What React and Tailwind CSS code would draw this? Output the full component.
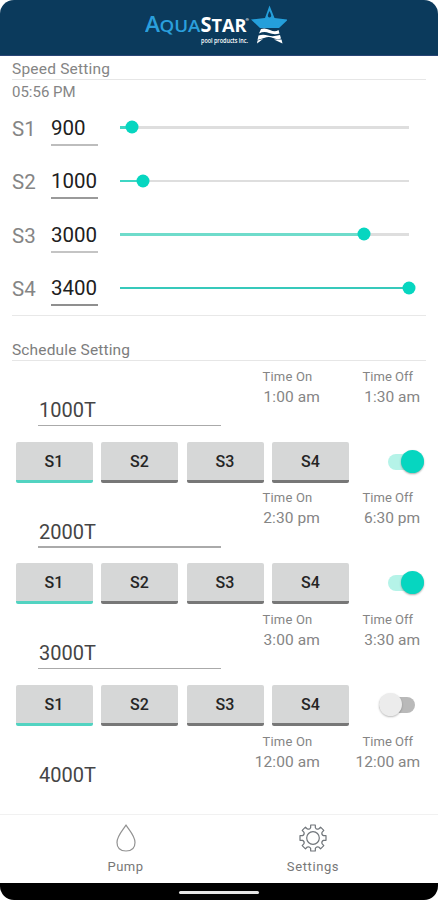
const speeds = [
  { id: 'S1', value: '900', pct: 4, line: 'bg-[#bdbdbd]', fill: 'bg-[#3fd6c4]' },
  { id: 'S2', value: '1000', pct: 7.8, line: 'bg-[#9a9a9a]', fill: 'bg-[#3fd6c4]' },
  { id: 'S3', value: '3000', pct: 84.6, line: 'bg-[#c4c4c4]', fill: 'bg-[#6fdccb]' },
  { id: 'S4', value: '3400', pct: 100, line: 'bg-[#8f8f8f]', fill: 'bg-[#36c9bb]' },
];

const schedules = [
  { name: '1000T', on: '1:00 am', off: '1:30 am', enabled: true },
  { name: '2000T', on: '2:30 pm', off: '6:30 pm', enabled: true },
  { name: '3000T', on: '3:00 am', off: '3:30 am', enabled: false },
  { name: '4000T', on: '12:00 am', off: '12:00 am' },
];

function Logo() {
  return (
    <svg width="142" height="48" viewBox="0 0 142 48" className="mt-1 mr-[7px]" fontFamily="'Open Sans', sans-serif">
      <g fill="#2a9fdc" fontWeight="600">
        <text x="0" y="28" fontSize="21" textLength="15" lengthAdjust="spacingAndGlyphs">A</text>
        <text x="14.500" y="28" fontSize="17" textLength="41" lengthAdjust="spacingAndGlyphs">QUA</text>
      </g>
      <g fill="#fff" fontWeight="700">
        <text x="55.500" y="28" fontSize="21.5" textLength="11" lengthAdjust="spacingAndGlyphs">S</text>
        <text x="66.500" y="28" fontSize="17" textLength="35" lengthAdjust="spacingAndGlyphs">TAR</text>
        <text x="100.500" y="17" fontSize="4">®</text>
        <text x="56" y="38.500" fontSize="6.5" fontWeight="600" textLength="47" lengthAdjust="spacingAndGlyphs">pool products inc.</text>
      </g>
      <path d="M106 15.500L120 14L124.500 1.500L129.500 14L143 15.500L134 24H115Z" fill="#249fdb" />
      <path d="M124.500 7C122.500 11 122 13 124.500 13.500C127 13 126.500 11 124.500 7Z" fill="#0c3a5d" />
      <path d="M116 25Q120 23.500 125 26T133.500 26L134.500 29.500Q129 31 124 29T114 29.500Z" fill="#fff" />
      <path d="M113.500 31.500Q118 30 123 31.500T135 31L136 34.500Q132 36 128 34T119 34L112.500 36Z" fill="#fff" />
      <path d="M112.500 36.500L118 35L112 39.500ZM129 35.500L136.500 35.500L137.500 39.500Z" fill="#fff" />
    </svg>
  );
}

function SpeedRow({ speed }) {
  return (
    <div className="flex h-[53.5px] items-start pl-3">
      <span className="mt-[14px] w-[39px] text-[20.500px] leading-7 text-[#858585]">{speed.id}</span>
      <div className="w-[47px]">
        <div className="mt-[13px] h-[30px] text-[20.500px] leading-7 text-[#202020]">{speed.value}</div>
        <div className={`h-[2px] ${speed.line}`} />
      </div>
      <div className="relative mt-[25.5px] ml-[22px] h-[2.5px] w-[289px] bg-[#dedede]">
        <div className={`h-full ${speed.fill}`} style={{ width: `${speed.pct}%` }} />
        <div className="absolute top-1/2 size-[13px] -translate-1/2 rounded-full bg-[#06d6c0]" style={{ left: `${speed.pct}%` }} />
      </div>
    </div>
  );
}

function Toggle({ on }) {
  return on ? (
    <div className="relative mt-[12px] ml-[39px] h-4 w-9 rounded-full bg-[#b5f3e8]">
      <div className="absolute -top-[4px] left-[13px] size-[23px] rounded-full bg-[#06d6c0] shadow-[0_1px_2px_#0005]" />
    </div>
  ) : (
    <div className="relative mt-[12px] ml-[30px] h-4 w-9 rounded-full bg-[#b9b9b9]">
      <div className="absolute -top-[4px] left-0 size-[23px] rounded-full bg-[#ececec] shadow-[0_1px_2px_#0004]" />
    </div>
  );
}

function Schedule({ item }) {
  return (
    <div className="h-[121.7px]">
      <div className="flex h-[80.5px]">
        <div className="ml-[38px] w-[183px] pt-[35px]">
          <div className="h-[28.5px] pl-px text-[20px] leading-7 text-[#454545]">{item.name}</div>
          {item.enabled !== undefined && <div className="h-[1.5px] bg-[#aaa]" />}
        </div>
        <div className="w-[99px] pt-[5.5px] text-right text-[#858585]">
          <div className="pr-[7.500px] text-[13px] leading-5 tracking-[0.2px]">Time On</div>
          <div className="text-[15.500px] leading-5 tracking-[0.1px]">{item.on}</div>
        </div>
        <div className="w-[100px] pt-[5.5px] text-right text-[#858585]">
          <div className="pr-[7px] text-[13px] leading-5">Time Off</div>
          <div className="text-[15.500px] leading-5">{item.off}</div>
        </div>
      </div>
      {item.enabled !== undefined && (
        <div className="flex pl-[15.5px]">
          <div className="flex gap-[8.500px]">
            {speeds.map((s, i) => (
              <div
                key={s.id}
                className={`flex h-[41px] w-[77px] items-center justify-center rounded-[2px] border-b-3 bg-[#d6d7d7] pt-[2px] text-[16px] font-medium text-[#252525] ${i === 0 ? 'border-[#52d3c1]' : 'border-[#777]'}`}
              >
                {s.id}
              </div>
            ))}
          </div>
          <Toggle on={item.enabled} />
        </div>
      )}
    </div>
  );
}

function Gear() {
  const d = Array.from({ length: 8 }, (_, i) => {
    const at = (deg, r) => {
      const a = ((i * 45 + deg - 90) * Math.PI) / 180;
      return `${(14 + Math.cos(a) * r).toFixed(2)} ${(14 + Math.sin(a) * r).toFixed(2)}`;
    };
    return `${i === 0 ? 'M' : 'L'}${at(-10, 13.2)}L${at(10, 13.2)}L${at(13, 10.6)}Q${at(22.5, 9)} ${at(32, 10.6)}`;
  }).join('');
  return (
    <svg width="28" height="28" viewBox="0 0 28 28" fill="none" stroke="#70757a" strokeWidth="1.2" strokeLinejoin="round">
      <path d={`${d}Z`} />
      <circle cx="14" cy="14" r="6.3" />
    </svg>
  );
}

export default function App() {
  return (
    <div className="h-[900px] w-[438px] overflow-hidden bg-white font-['Roboto',sans-serif]">
      <div className="flex h-full flex-col overflow-hidden rounded-[14px] bg-white">
        <header className="flex h-14 shrink-0 justify-center border-b border-[#294575] bg-[#0b3a5c]">
          <Logo />
        </header>
        <main className="h-[758px] shrink-0 overflow-hidden">
          <div className="mx-3 h-[23.5px] border-b-[1.5px] border-[#e6e6e6] pt-[3px] text-[15.500px] leading-5 tracking-[0.2px] text-[#858585]">Speed Setting</div>
          <div className="h-[21px] pt-[2px] pl-3 text-[15px] leading-5 text-[#858585]">05:56 PM</div>
          {speeds.map((s) => <SpeedRow key={s.id} speed={s} />)}
          <div className="mx-3 h-[1.5px] bg-[#e8e8e8]" />
          <div className="mx-3 mt-[24px] h-[21px] border-b-[1.5px] border-[#e6e6e6] text-[15.500px] leading-5 tracking-[0.15px] text-[#7d7d7d]">Schedule Setting</div>
          {schedules.map((s) => <Schedule key={s.name} item={s} />)}
        </main>
        <nav className="flex h-[69px] shrink-0 justify-center border-t border-[#f1f1f1] text-[13px] leading-4 text-[#777]">
          <div className="flex w-[188px] flex-col items-center pt-[9px]">
            <svg width="20" height="28" viewBox="0 0 20 28" fill="none" stroke="#929292" strokeWidth="1.2" strokeLinejoin="round">
              <path d="M10 1C8 5 1 11.500 1 18.500C1 24 4 27 10 27S19 24 19 18.500C19 11.500 12 5 10 1Z" />
            </svg>
            <span className="mt-[7px] tracking-[0.5px]">Pump</span>
          </div>
          <div className="flex w-[187px] flex-col items-center pt-[9px]">
            <Gear />
            <span className="mt-[7px] tracking-[0.6px]">Settings</span>
          </div>
        </nav>
        <footer className="flex flex-1 justify-center bg-black pt-[8px]">
          <div className="h-[3px] w-20 rounded-full bg-[#e5e5e5]" />
        </footer>
      </div>
    </div>
  );
}
